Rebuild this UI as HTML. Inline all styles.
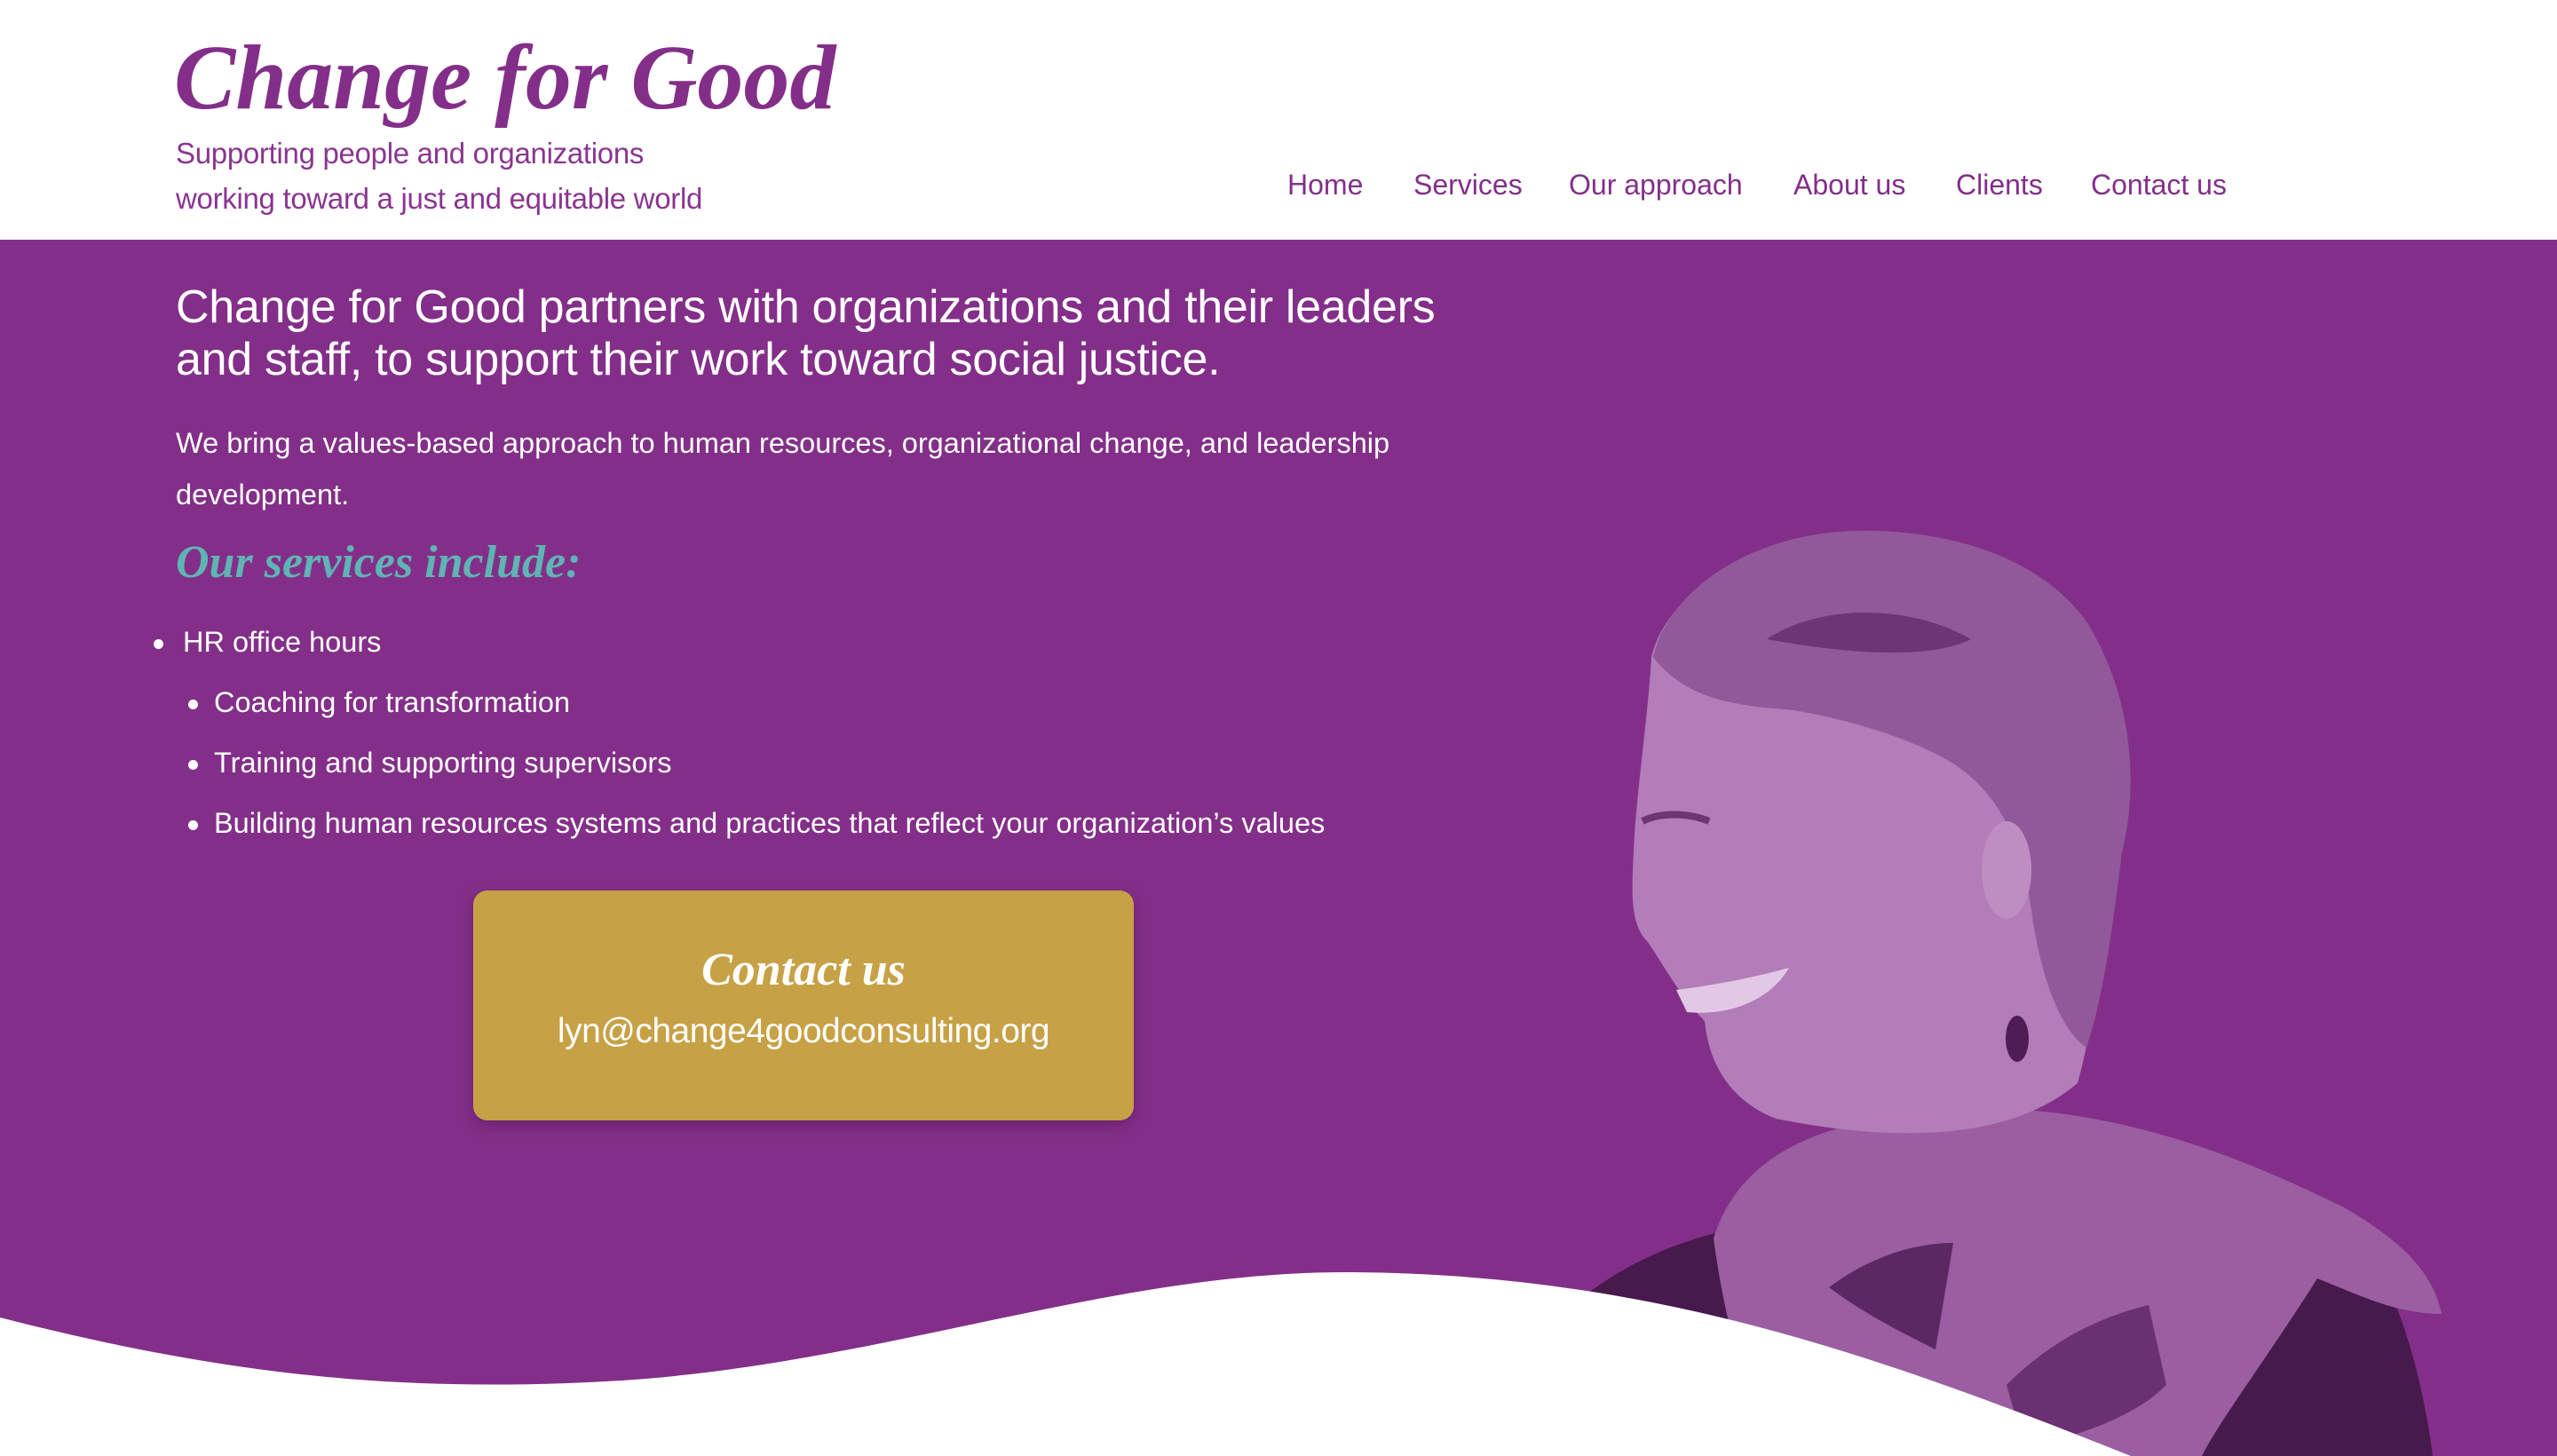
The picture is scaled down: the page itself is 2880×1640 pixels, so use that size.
<!DOCTYPE html>
<html><head><meta charset="utf-8"><style>
*{margin:0;padding:0;box-sizing:border-box}
body{width:2880px;height:1640px;overflow:hidden;background:#832f89;font-family:"Liberation Sans",sans-serif;position:relative}
.hdr{position:absolute;left:0;top:0;width:2880px;height:270px;background:#fff}
.a{position:absolute;white-space:nowrap}
.title{left:196px;top:28px;font-family:"Liberation Serif",serif;font-style:italic;font-weight:bold;font-size:104px;color:#832f89;letter-spacing:0px}
.sub{left:198px;font-size:33px;color:#8a3590;letter-spacing:-0.3px}
.nav{top:190px;font-size:32px;color:#832f89}
.w{color:#fff}
.h{left:198px;font-size:52px;letter-spacing:-0.3px}
.p{left:198px;font-size:32.5px}
.svc{left:198px;top:604px;font-family:"Liberation Serif",serif;font-style:italic;font-weight:bold;font-size:52px;color:#5fb4b4}
.li{font-size:32.5px;color:#fff}
.dot{position:absolute;width:11px;height:11px;border-radius:50%;background:#fff}
.btn{position:absolute;left:533px;top:1003px;width:744px;height:259px;background:#c7a146;border-radius:16px;box-shadow:0 6px 16px rgba(60,10,60,.35);text-align:center;color:#fff}
</style></head><body>
<div class="hdr"></div>
<div class="a title">Change for Good</div>
<div class="a sub" style="top:154px">Supporting people and organizations</div>
<div class="a sub" style="top:205px">working toward a just and equitable world</div>
<div class="a nav" style="left:1450px">Home</div>
<div class="a nav" style="left:1592px">Services</div>
<div class="a nav" style="left:1767px">Our approach</div>
<div class="a nav" style="left:2020px">About us</div>
<div class="a nav" style="left:2203px">Clients</div>
<div class="a nav" style="left:2355px">Contact us</div>

<svg class="a" style="left:0;top:0" width="2880" height="1640" viewBox="0 0 2880 1640">
<path d="M1772 1470 C1830 1420 1900 1395 1950 1385 L2660 1410 C2700 1440 2730 1560 2740 1640 L1772 1640 Z" fill="#461a4c"/>
<path d="M1930 1395 C1960 1300 2050 1260 2200 1250 C2350 1240 2500 1290 2640 1360 C2700 1395 2740 1430 2750 1480 C2700 1480 2660 1460 2610 1440 C2560 1520 2500 1600 2480 1640 L2000 1640 C1960 1560 1940 1470 1930 1395 Z" fill="#9a5ea1"/>
<path d="M2060 1450 C2100 1420 2150 1400 2200 1400 L2180 1520 C2140 1500 2100 1480 2060 1450Z" fill="#5c2863"/>
<path d="M2260 1560 C2320 1500 2380 1480 2420 1470 L2440 1560 C2400 1600 2330 1620 2280 1630Z" fill="#6a3172"/>
<path d="M2000 1260 C1950 1240 1925 1200 1920 1150 C1890 1120 1870 1080 1855 1060 C1835 1040 1838 1000 1840 960 C1842 900 1855 820 1860 740 C1880 660 1980 610 2090 600 C2200 595 2300 640 2340 720 C2390 790 2400 880 2385 960 C2370 1040 2360 1150 2340 1220 C2270 1280 2150 1290 2000 1260 Z" fill="#b27db8"/>
<path d="M1862 740 C1880 660 1980 600 2090 598 C2200 596 2300 630 2350 700 C2400 780 2410 880 2390 960 C2380 1040 2370 1120 2350 1180 C2320 1160 2300 1100 2290 1040 C2280 960 2260 900 2200 860 C2150 830 2080 810 2020 800 C1960 795 1900 790 1862 740 Z" fill="#915999"/>
<path d="M1990 720 C2050 680 2150 680 2220 720 C2180 740 2100 740 1990 720Z" fill="#6c3574"/>
<ellipse cx="2260" cy="980" rx="28" ry="55" fill="#be8ec3"/>
<ellipse cx="2272" cy="1170" rx="13" ry="26" fill="#4d1d53"/>
<path d="M1888 1115 C1930 1110 1980 1100 2015 1090 C1995 1125 1950 1145 1900 1140 Z" fill="#e3c8e6"/>
<path d="M1850 925 C1870 915 1900 915 1925 925" stroke="#6c3574" stroke-width="8" fill="none"/>
<path d="M0 1484 C250 1548 450 1570 700 1555 C1000 1535 1250 1432 1520 1433 C1850 1435 2100 1520 2400 1640 L0 1640 Z" fill="#fff"/>
</svg>

<div class="a h w" style="top:316px">Change for Good partners with organizations and their leaders</div>
<div class="a h w" style="top:375px">and staff, to support their work toward social justice.</div>
<div class="a p w" style="top:481px">We bring a values-based approach to human resources, organizational change, and leadership</div>
<div class="a p w" style="top:539px">development.</div>
<div class="a svc">Our services include:</div>
<div class="dot" style="left:173px;top:720px"></div>
<div class="a li" style="left:206px;top:705px">HR office hours</div>
<div class="dot" style="left:212px;top:788px"></div>
<div class="a li" style="left:241px;top:773px">Coaching for transformation</div>
<div class="dot" style="left:212px;top:856px"></div>
<div class="a li" style="left:241px;top:841px">Training and supporting supervisors</div>
<div class="dot" style="left:212px;top:924px"></div>
<div class="a li" style="left:241px;top:909px">Building human resources systems and practices that reflect your organization’s values</div>
<div class="btn">
<div style="margin-top:60px;font-family:'Liberation Serif',serif;font-style:italic;font-weight:bold;font-size:52px">Contact us</div>
<div style="margin-top:18px;font-size:39px;letter-spacing:-0.5px">lyn@change4goodconsulting.org</div>
</div>
</body></html>
